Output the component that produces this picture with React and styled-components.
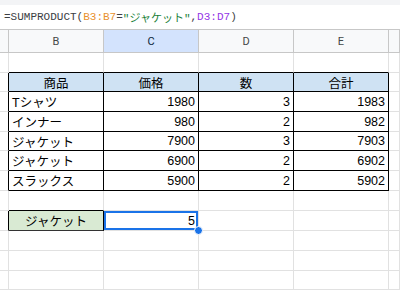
import React from "react";
import styled, { createGlobalStyle } from "styled-components";

const GlobalStyle = createGlobalStyle`
  html, body {
    margin: 0;
    padding: 0;
    background: #ffffff;
    overflow: hidden;
  }
  * {
    box-sizing: border-box;
  }
`;

const COLS = [9, 95, 95, 95, 95, 11];
const GRID = "#e1e1e1";
const INK = "#000000";

const Page = styled.div`
  width: 400px;
  height: 290px;
  display: flex;
  flex-direction: column;
  font-family: "Liberation Sans", Arial, "Noto Sans CJK JP", sans-serif;
`;

const TopStrip = styled.div`
  height: 5px;
  background: #f3f4f6;
`;

const FormulaBar = styled.div`
  height: 26px;
  display: flex;
  align-items: center;
  padding-left: 4px;
  border-bottom: 1px solid #c7c7c7;
  font-family: "Liberation Mono", "Noto Sans CJK JP", monospace;
  font-size: 11px;
  color: #3c4043;
  white-space: pre;
`;

const Token = styled.span`
  color: ${(p) => p.$color || "#3c4043"};
`;

const Sheet = styled.div`
  display: grid;
  grid-template-columns: ${COLS.map((c) => `${c}px`).join(" ")};
`;

const HeadCell = styled.div`
  height: 23px;
  display: flex;
  align-items: center;
  justify-content: center;
  background: ${(p) => (p.$active ? "#d3e3fd" : "#f8f9fa")};
  border-right: 1px solid #c7c7c7;
  border-bottom: 1px solid #c7c7c7;
  font-family: Roboto, "Liberation Sans", sans-serif;
  font-size: 11px;
  color: ${(p) => (p.$active ? "#0b1f3a" : "#444746")};
`;

const Cell = styled.div`
  position: relative;
  height: ${(p) => p.$h}px;
  display: flex;
  align-items: center;
  justify-content: ${(p) =>
    p.$align === "right" ? "flex-end" : p.$align === "center" ? "center" : "flex-start"};
  padding: 0 3px 0 3px;
  background: ${(p) => p.$bg || "#ffffff"};
  border-right: 1px solid ${(p) => p.$right || GRID};
  border-bottom: 1px solid ${(p) => p.$bottom || GRID};
  box-shadow: ${(p) => (p.$selected ? "inset 0 0 0 2px #1a73e8" : "none")};
  font-size: 12.5px;
  color: #000000;
  white-space: nowrap;
  overflow: visible;
`;

const Handle = styled.span`
  position: absolute;
  right: -5px;
  bottom: -5px;
  width: 9px;
  height: 9px;
  border-radius: 50%;
  background: #1a73e8;
  border: 1px solid #ffffff;
  z-index: 2;
`;

const HEIGHTS = [20, 19, 20, 20, 19, 20, 20, 20, 20, 20, 20, 19];

const TABLE = [
  ["商品", "価格", "数", "合計"],
  ["Tシャツ", "1980", "3", "1983"],
  ["インナー", "980", "2", "982"],
  ["ジャケット", "7900", "3", "7903"],
  ["ジャケット", "6900", "2", "6902"],
  ["スラックス", "5900", "2", "5902"],
];

// row index in HEIGHTS: 0 = blank row above table, 1..6 = table, 7 blank, 8 lookup row
function cellsFor(r) {
  const inTable = r >= 1 && r <= 6;
  const aboveTable = r === 0;
  const aboveLookup = r === 7;
  const cells = [];
  for (let c = 0; c < COLS.length; c++) {
    const cell = { text: "", align: "left" };
    if (c === 0 && inTable) cell.right = INK;
    if (c >= 1 && c <= 4) {
      if (aboveTable) cell.bottom = INK;
      if (inTable) {
        cell.right = INK;
        cell.bottom = INK;
        const row = TABLE[r - 1];
        cell.text = row[c - 1];
        if (r === 1) {
          cell.bg = "#cfe2f3";
          cell.align = "center";
        } else {
          cell.align = c === 1 ? "left" : "right";
        }
      }
    }
    if (r === 8 && c === 0) cell.right = INK;
    if (r === 8 && c === 1) {
      cell.text = "ジャケット";
      cell.align = "center";
      cell.bg = "#d9ead3";
      cell.right = INK;
      cell.bottom = "#333333";
    }
    if (aboveLookup && c === 1) cell.bottom = INK;
    if (r === 8 && c === 2) {
      cell.text = "5";
      cell.align = "right";
      cell.selected = true;
    }
    cells.push(cell);
  }
  return cells;
}

export default function App() {
  return (
    <Page>
      <GlobalStyle />
      <TopStrip />
      <FormulaBar>
        <Token>=SUMPRODUCT(</Token>
        <Token $color="#e8912d">B3:B7</Token>
        <Token>=</Token>
        <Token $color="#188038">"ジャケット"</Token>
        <Token>,</Token>
        <Token $color="#9334e6">D3:D7</Token>
        <Token>)</Token>
      </FormulaBar>
      <Sheet>
        {["", "B", "C", "D", "E", ""].map((l, i) => (
          <HeadCell key={`h${i}`} $active={l === "C"}>
            {l}
          </HeadCell>
        ))}
        {HEIGHTS.map((h, r) =>
          cellsFor(r).map((cell, c) => (
            <Cell
              key={`${r}-${c}`}
              $h={h}
              $align={cell.align}
              $bg={cell.bg}
              $right={cell.right}
              $bottom={cell.bottom}
              $selected={cell.selected}
            >
              {cell.text}
              {cell.selected && <Handle />}
            </Cell>
          ))
        )}
      </Sheet>
    </Page>
  );
}
